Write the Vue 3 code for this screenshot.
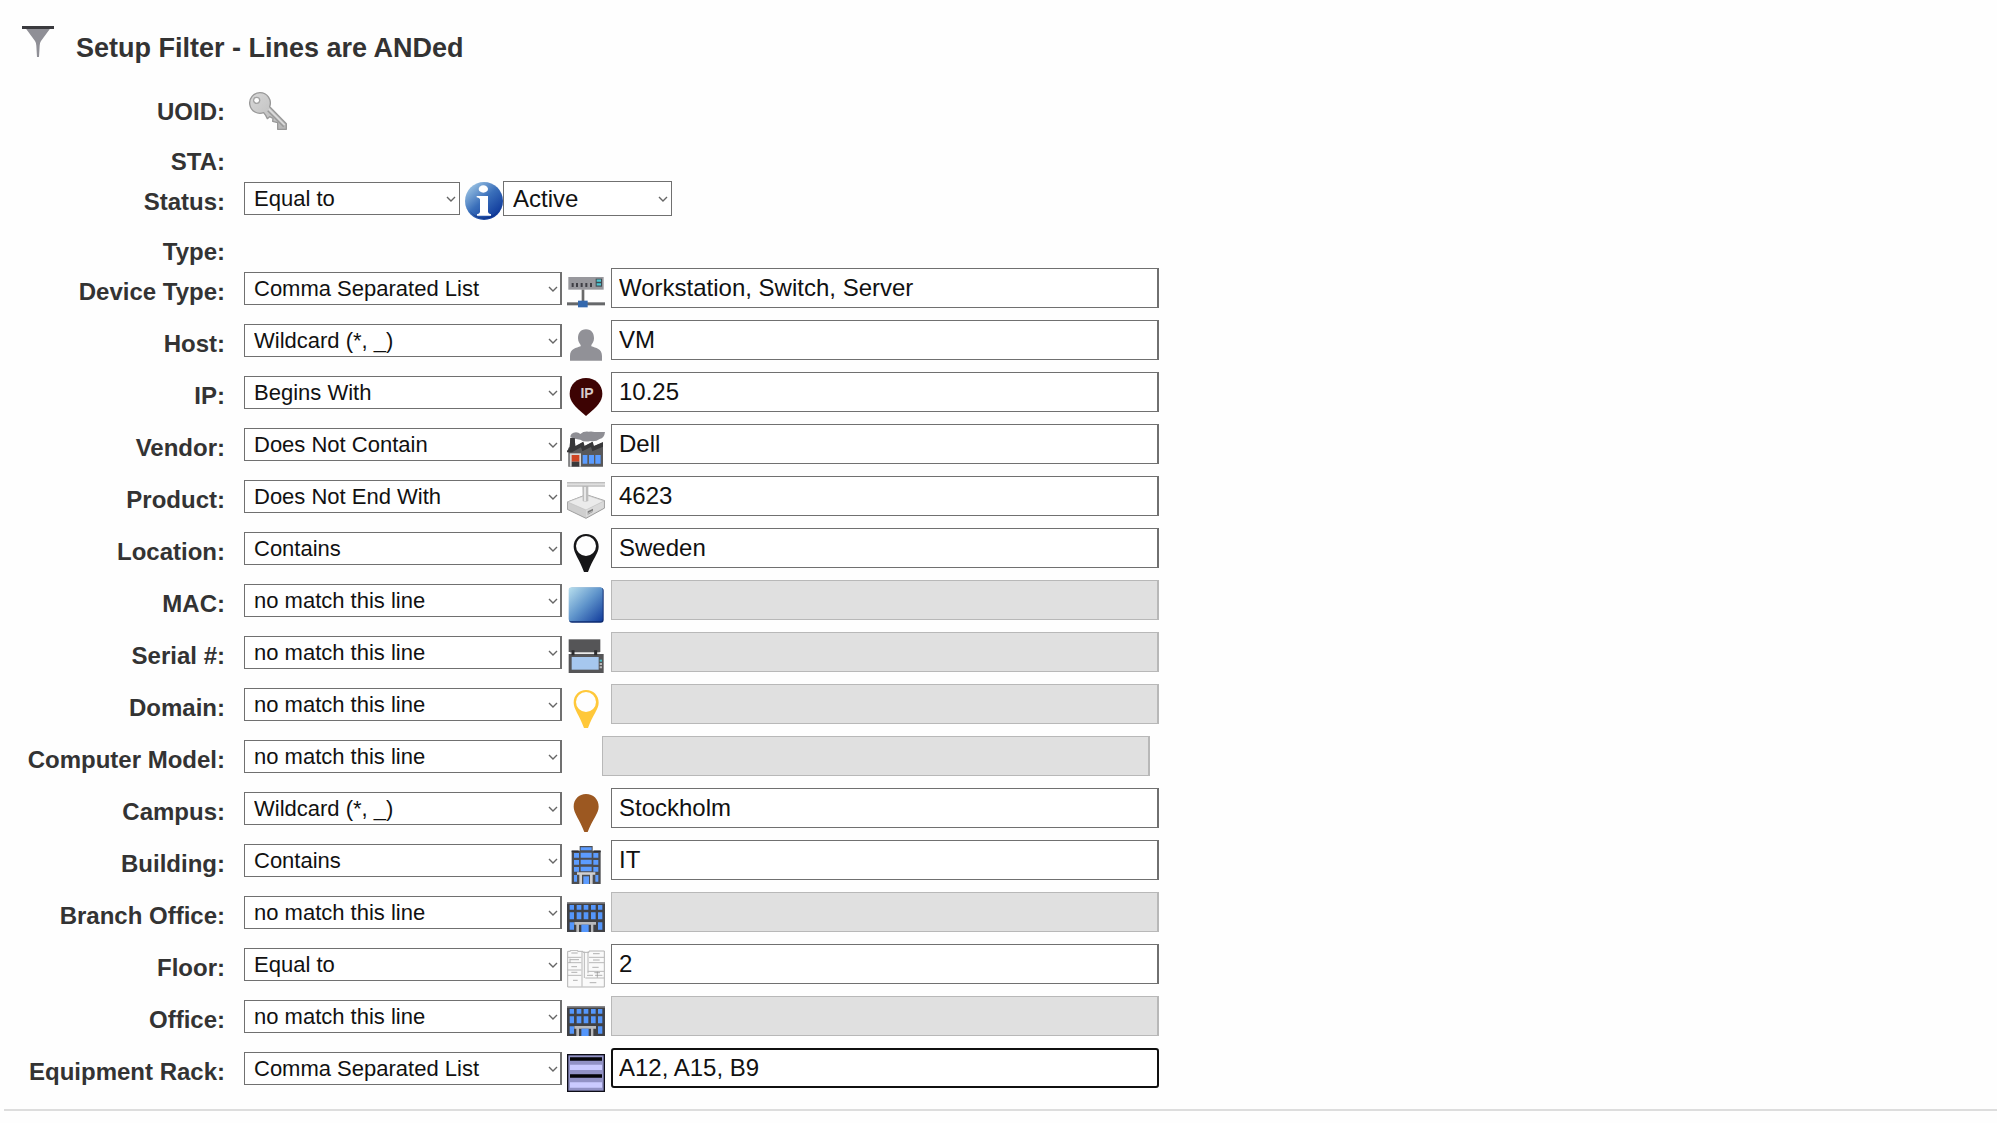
<template>
  <main class="filter-page">
    <svg class="sprite" width="0" height="0" aria-hidden="true">
      <defs>
        <linearGradient id="g-blue" x1="0" y1="0" x2="1" y2="1">
          <stop offset="0" stop-color="#b9e0ee" />
          <stop offset="0.5" stop-color="#5f94cb" />
          <stop offset="1" stop-color="#123c9c" />
        </linearGradient>
        <linearGradient id="g-info" x1="0.1" y1="0.1" x2="0.8" y2="0.9">
          <stop offset="0" stop-color="#9cc4e4" />
          <stop offset="0.5" stop-color="#3a6fba" />
          <stop offset="1" stop-color="#0f3a9c" />
        </linearGradient>
        <linearGradient id="g-key" x1="0" y1="0" x2="1" y2="1">
          <stop offset="0" stop-color="#d8d8d8" />
          <stop offset="1" stop-color="#b4b4b4" />
        </linearGradient>
        <linearGradient id="g-bar" x1="0" y1="0" x2="0" y2="1">
          <stop offset="0" stop-color="#b5b5b5" />
          <stop offset="0.5" stop-color="#e2e2e2" />
          <stop offset="1" stop-color="#b0b0b0" />
        </linearGradient>
      </defs>
      <symbol id="i-funnel" viewBox="0 0 114 114">
        <path d="M21 17H93L66 54Q62 60 62 68L60 102H54L52 68Q52 60 48 54Z" fill="#8f8f96" />
        <rect x="9" y="9" width="96" height="9" fill="#3a3a3e" />
      </symbol>
      <symbol id="i-key" viewBox="0 0 114 114">
        <path
          d="M33 2A31 31 0 1 0 44 62L50 70L55 80L62 74L72 79L71 88L86 92V112H112V95L62 44A31 31 0 0 0 33 2Z"
          fill="url(#g-key)" stroke="#989898" stroke-width="4" stroke-linejoin="round"
        />
        <path d="M56 56L104 104" stroke="#999" stroke-width="4" />
        <path d="M60 52L107 99" stroke="#dedede" stroke-width="4" />
        <circle cx="23" cy="25" r="11" fill="#a3a3a3" />
        <circle cx="23" cy="25" r="7" fill="#fff" />
      </symbol>
      <symbol id="i-info" viewBox="0 0 114 114">
        <circle cx="57" cy="57" r="57" fill="url(#g-info)" />
        <path d="M12 82A52 52 0 0 0 102 82A52 52 0 0 1 12 82Z" fill="#061a5e" />
        <path d="M14 86A50 48 0 0 0 100 86A54 54 0 0 1 14 86Z" fill="#061a5e" opacity="0.7" />
        <ellipse cx="55" cy="21" rx="14" ry="11" fill="#fff" />
        <path d="M35 42H69V90Q70 96 78 97V101H36V97Q44 96 45 90V52Q44 47 35 46Z" fill="#fff" />
      </symbol>
      <symbol id="i-device" viewBox="0 0 114 114">
        <rect x="44" y="46" width="8" height="40" fill="#6a6a6a" />
        <rect x="0" y="85" width="114" height="9" fill="#66686a" />
        <rect x="33" y="80" width="29" height="20" fill="#3468ad" />
        <rect x="4" y="9" width="106" height="38" fill="#98989d" />
        <path d="M17 27V39M30 27V39M44 27V39M58 27V39M72 27V39" stroke="#3f3f45" stroke-width="6" />
        <rect x="86" y="14" width="19" height="24" fill="#3f4b52" />
        <path d="M89 20H102M89 31H102" stroke="#4fc6d2" stroke-width="7" />
      </symbol>
      <symbol id="i-host" viewBox="0 0 114 114">
        <path
          d="M57 10C74 10 81 22 81 37C81 47 76 53 73 57V61C86 66 105 68 105 90V104H9V90C9 68 28 66 41 61V57C38 53 33 47 33 37C33 22 40 10 57 10Z"
          fill="#919197"
        />
      </symbol>
      <symbol id="i-ip" viewBox="0 0 114 114">
        <path d="M57 0C85 0 106 20 106 47C106 70 92 84 57 114C22 84 8 70 8 47C8 20 29 0 57 0Z" fill="#3d0303" />
      </symbol>
      <symbol id="i-vendor" viewBox="0 0 114 114">
        <path d="M10 22Q10 8 27 7Q35 7 40 12Q50 3 65 5Q74 3 82 6H114Q112 24 98 27Q86 36 70 33Q52 38 40 29L23 26Z" fill="#8e8e94" />
        <path d="M4 54L8 50L10 24H23L25 50L48 36L51 49L76 36L79 49L108 38V110H4Z" fill="#58585a" />
        <path d="M0 62L8 54L10 24H23L25 48L49 35L53 48L77 35L81 48L108 36V50L76 64L72 51L46 64L42 52L15 67H0Z" fill="#38383a" />
        <rect x="8" y="70" width="34" height="40" fill="#d7d7d7" />
        <rect x="14" y="75" width="23" height="20" fill="#cf4524" />
        <rect x="14" y="95" width="23" height="15" fill="#3a3a3c" />
        <path d="M47 75H61V101H47ZM66 75H81V101H66ZM85 75H101V101H85Z" fill="#5b9cff" />
      </symbol>
      <symbol id="i-product" viewBox="0 0 114 114">
        <path d="M1 60L58 38L113 56V78L57 109L1 82Z" fill="#cfcfcf" stroke="#9c9c9c" stroke-width="3" />
        <path d="M2 60L58 39L111 57L57 84Z" fill="#ebebeb" stroke="#c0c0c0" stroke-width="2" />
        <path d="M57 85V106L110 77V59Z" fill="#dadada" />
        <path d="M62 88L78 80V89L62 98Z" fill="#7c7c7c" />
        <path d="M62 95L78 87" stroke="#eee" stroke-width="2" />
        <path d="M46 12H64V57Q55 62 47 57Z" fill="#bdbdbd" />
        <path d="M54 14V58" stroke="#f0f0f0" stroke-width="5" />
        <rect x="0" y="0" width="114" height="14" fill="url(#g-bar)" />
      </symbol>
      <symbol id="i-pin" viewBox="0 0 114 114">
        <path
          fill-rule="evenodd"
          d="M57 0C79 0 95 16 95 38C95 58 76 76 63 114H51C38 76 20 58 20 38C20 16 36 0 57 0ZM57 6A30 30 0 0 0 57 66A30 30 0 0 0 57 6Z"
          fill="currentColor"
        />
      </symbol>
      <symbol id="i-campus" viewBox="0 0 114 114">
        <path d="M57 0C79 0 95 16 95 38C95 58 76 76 62 114H52C38 76 20 58 20 38C20 16 36 0 57 0Z" fill="#9c5821" />
      </symbol>
      <symbol id="i-mac" viewBox="0 0 114 114">
        <rect x="6" y="5" width="104" height="105" rx="9" fill="#0b2a70" />
        <rect x="5" y="4" width="102" height="102" rx="8" fill="url(#g-blue)" />
      </symbol>
      <symbol id="i-serial" viewBox="0 0 114 114">
        <rect x="5" y="4" width="95" height="38" fill="#555557" />
        <path d="M9 44H98" stroke="#c4c4c4" stroke-width="4" />
        <rect x="5" y="48" width="105" height="57" fill="#555557" />
        <path d="M18 37V52M86 37V52" stroke="#2c2c2e" stroke-width="9" />
        <rect x="14" y="57" width="81" height="38" fill="#a6c7ee" />
        <rect x="98" y="65" width="7" height="6" fill="#47b9c4" />
        <path d="M98 78H105M98 88H105" stroke="#b8b8b8" stroke-width="6" />
      </symbol>
      <symbol id="i-building" viewBox="0 0 114 114">
        <path d="M38 0H77V14H101V114H14V14H38Z" fill="#4c4d50" />
        <path d="M14 16H35M80 16H101" stroke="#303033" stroke-width="5" />
        <path
          d="M41 4H74V13H41ZM41 20H74V35H41ZM41 41H74V55H41ZM41 62H74V76H41ZM21 21H36V35H21ZM79 21H94V35H79ZM21 42H36V56H21ZM79 42H94V56H79ZM21 63H36V77H21ZM79 63H94V77H79Z"
          fill="#5c9cff"
        />
        <path d="M21 87H30V107H21ZM85 87H94V107H85Z" fill="#5c9cff" />
        <path d="M14 79H85V86H77V114H69V86H45V114H37V86H30V79Z" fill="#d0d0d2" />
        <rect x="49" y="91" width="17" height="23" fill="#5c9cff" />
      </symbol>
      <symbol id="i-office" viewBox="0 0 114 114">
        <rect x="0" y="12" width="114" height="90" fill="#404145" />
        <rect x="0" y="12" width="114" height="5" fill="#86868a" />
        <path
          d="M8 21H21V35H8ZM29 21H43V35H29ZM50 21H64V35H50ZM72 21H86V35H72ZM93 21H106V35H93ZM8 43H21V64H8ZM29 43H43V64H29ZM50 43H64V64H50ZM72 43H86V64H72ZM93 43H106V64H93ZM8 73H21V95H8ZM93 73H106V95H93Z"
          fill="#5496fb"
        />
        <path d="M22 72H87V80H79V102H72V80H36V102H28V80H22Z" fill="#b9babd" />
        <rect x="43" y="80" width="22" height="22" fill="#5496fb" />
      </symbol>
      <symbol id="i-floor" viewBox="0 0 114 114">
        <path d="M2 4H10V1H32V4H48V7H66V3H112V111H2Z" fill="#fafafa" stroke="#b4b4b4" stroke-width="3" />
        <path
          d="M2 22H43M2 38H43M2 60H43M2 76H43M66 22H112M66 38H112M62 64H112M55 84H112M45 5V110M52 5V84M63 5V70"
          fill="none" stroke="#b8b8b8" stroke-width="3"
        />
        <path
          d="M13 9H32M10 29H36M13 50H30M13 67H31M18 91H32M78 11H98M78 30H98M76 52H95M60 76H78M82 68H99M84 76H106M68 98H88M91 65V83M9 26V38"
          stroke="#8c8c8c" stroke-width="2"
        />
      </symbol>
      <symbol id="i-rack" viewBox="0 0 114 114">
        <rect x="2" y="2" width="110" height="110" fill="#9292c6" stroke="#0c0c16" stroke-width="4" />
        <path d="M9 15H105M9 66H105" stroke="#050508" stroke-width="11" />
        <path d="M9 40H105M9 93H105" stroke="#cacaff" stroke-width="16" />
      </symbol>
    </svg>

    <header class="filter-header">
      <svg class="icon" aria-hidden="true"><use href="#i-funnel" /></svg>
      <h1>Setup Filter - Lines are ANDed</h1>
    </header>

    <form @submit.prevent>
      <div class="row row-top">
        <span class="label">UOID:</span>
        <svg class="icon icon-key" aria-hidden="true"><use href="#i-key" /></svg>
      </div>
      <div class="row row-group"><span class="label">STA:</span></div>
      <div class="row row-top">
        <label class="label" for="status-op">Status:</label>
        <div class="controls">
          <select id="status-op" v-model="status.op" class="op op-short">
            <option v-for="op in operators" :key="op">{{ op }}</option>
          </select>
          <svg class="icon icon-info" aria-hidden="true"><use href="#i-info" /></svg>
          <select v-model="status.value" class="status-value" aria-label="Status value">
            <option>Active</option>
            <option>Inactive</option>
          </select>
        </div>
      </div>
      <div class="row row-group"><span class="label">Type:</span></div>

      <div v-for="line in lines" :key="line.id" class="row">
        <label class="label" :for="line.id">{{ line.label }}:</label>
        <div class="controls">
          <select v-model="line.op" class="op" :aria-label="line.label + ' match'">
            <option v-for="op in operators" :key="op">{{ op }}</option>
          </select>
          <svg v-if="line.icon" class="icon" :class="'icon-' + line.id" viewBox="0 0 114 114" aria-hidden="true">
            <use :href="'#i-' + line.icon" />
            <text v-if="line.icon === 'ip'" x="60" y="61" class="ip-text">IP</text>
          </svg>
          <input
            :id="line.id"
            v-model="line.value"
            type="text"
            class="value"
            :class="{ active: line.id === activeLine, 'no-icon': !line.icon }"
            :disabled="line.op === NO_MATCH"
            @focus="activeLine = line.id"
          />
        </div>
      </div>
    </form>
    <hr />
  </main>
</template>

<script setup>
import { ref } from 'vue'

const NO_MATCH = 'no match this line'

const operators = [
  NO_MATCH,
  'Equal to',
  'Contains',
  'Does Not Contain',
  'Begins With',
  'Does Not End With',
  'Wildcard (*, _)',
  'Comma Separated List'
]

const status = ref({ op: 'Equal to', value: 'Active' })
const activeLine = ref('rack')

const lines = ref([
  { id: 'device', label: 'Device Type', op: 'Comma Separated List', icon: 'device', value: 'Workstation, Switch, Server' },
  { id: 'host', label: 'Host', op: 'Wildcard (*, _)', icon: 'host', value: 'VM' },
  { id: 'ip', label: 'IP', op: 'Begins With', icon: 'ip', value: '10.25' },
  { id: 'vendor', label: 'Vendor', op: 'Does Not Contain', icon: 'vendor', value: 'Dell' },
  { id: 'product', label: 'Product', op: 'Does Not End With', icon: 'product', value: '4623' },
  { id: 'location', label: 'Location', op: 'Contains', icon: 'pin', value: 'Sweden' },
  { id: 'mac', label: 'MAC', op: NO_MATCH, icon: 'mac', value: '' },
  { id: 'serial', label: 'Serial #', op: NO_MATCH, icon: 'serial', value: '' },
  { id: 'domain', label: 'Domain', op: NO_MATCH, icon: 'pin', value: '' },
  { id: 'model', label: 'Computer Model', op: NO_MATCH, icon: '', value: '' },
  { id: 'campus', label: 'Campus', op: 'Wildcard (*, _)', icon: 'campus', value: 'Stockholm' },
  { id: 'building', label: 'Building', op: 'Contains', icon: 'building', value: 'IT' },
  { id: 'branch', label: 'Branch Office', op: NO_MATCH, icon: 'office', value: '' },
  { id: 'floor', label: 'Floor', op: 'Equal to', icon: 'floor', value: '2' },
  { id: 'office', label: 'Office', op: NO_MATCH, icon: 'office', value: '' },
  { id: 'rack', label: 'Equipment Rack', op: 'Comma Separated List', icon: 'rack', value: 'A12, A15, B9' }
])
</script>

<style>
body {
  margin: 0;
  background: #fefefe;
}
</style>

<style scoped>
.filter-page {
  font-family: "Liberation Sans", Arial, sans-serif;
  font-size: 24px;
  color: #333;
}
.sprite { display: block; }
.filter-header {
  display: flex;
  align-items: flex-start;
  gap: 19px;
  padding: 23px 19px 0;
}
h1 {
  margin: 7px 0 20px;
  font-size: 27px;
  line-height: 36px;
}
.row {
  display: flex;
  align-items: flex-start;
  gap: 19px;
  height: 52px;
}
.row-top { height: 50px; }
.row-group { height: 40px; }
.label {
  flex: none;
  width: 225px;
  text-align: right;
  font-weight: 700;
  line-height: 52px;
}
.controls {
  display: flex;
  align-items: flex-start;
}
.icon {
  display: block;
  flex: none;
  width: 38px;
  height: 38px;
}
.controls .icon { margin: 8px 6px 0 5px; }
.icon-key { margin: 6px 0 0 5px; }
.controls .icon-info { margin: 6px 0 0 5px; }
.icon-location { color: #161618; }
.icon-domain { color: #ffc83a; }
.ip-text {
  font: bold 42px "Liberation Sans", Arial, sans-serif;
  fill: #d8cccc;
  text-anchor: middle;
}
select,
.value {
  box-sizing: border-box;
  margin: 0;
  border: 1px solid #707070;
  border-radius: 0;
  font-family: inherit;
  color: #111;
  outline: none;
}
select {
  appearance: none;
  padding: 0 24px 0 9px;
  background: #fff url("data:image/svg+xml,%3Csvg xmlns='http://www.w3.org/2000/svg' width='10' height='6'%3E%3Cpath d='M1 1L5 5L9 1' fill='none' stroke='%23666' stroke-width='1.4'/%3E%3C/svg%3E") no-repeat right 3px center;
}
.op {
  width: 318px;
  height: 33px;
  margin-top: 6px;
  border-right-width: 2px;
  background-position: right 2px center;
  font-size: 22px;
}
.op-short {
  width: 216px;
  border-right-width: 1px;
  background-position: right 3px center;
}
.status-value {
  width: 169px;
  height: 35px;
  margin-top: 5px;
  font-size: 24px;
}
.value {
  width: 548px;
  height: 40px;
  margin-top: 2px;
  padding: 0 7px;
  border-right-width: 2px;
  background: #fff;
  font-size: 24px;
}
.value:disabled {
  background: #e0e0e0;
  border-color: #b8b8b8;
}
.value.no-icon { margin-left: 40px; }
.value.active {
  padding: 0 6px;
  border: 2px solid #101010;
  border-radius: 3px;
}
hr {
  margin: 11px 0 0 4px;
  border: 0;
  border-top: 2px solid #ddd;
}
</style>
